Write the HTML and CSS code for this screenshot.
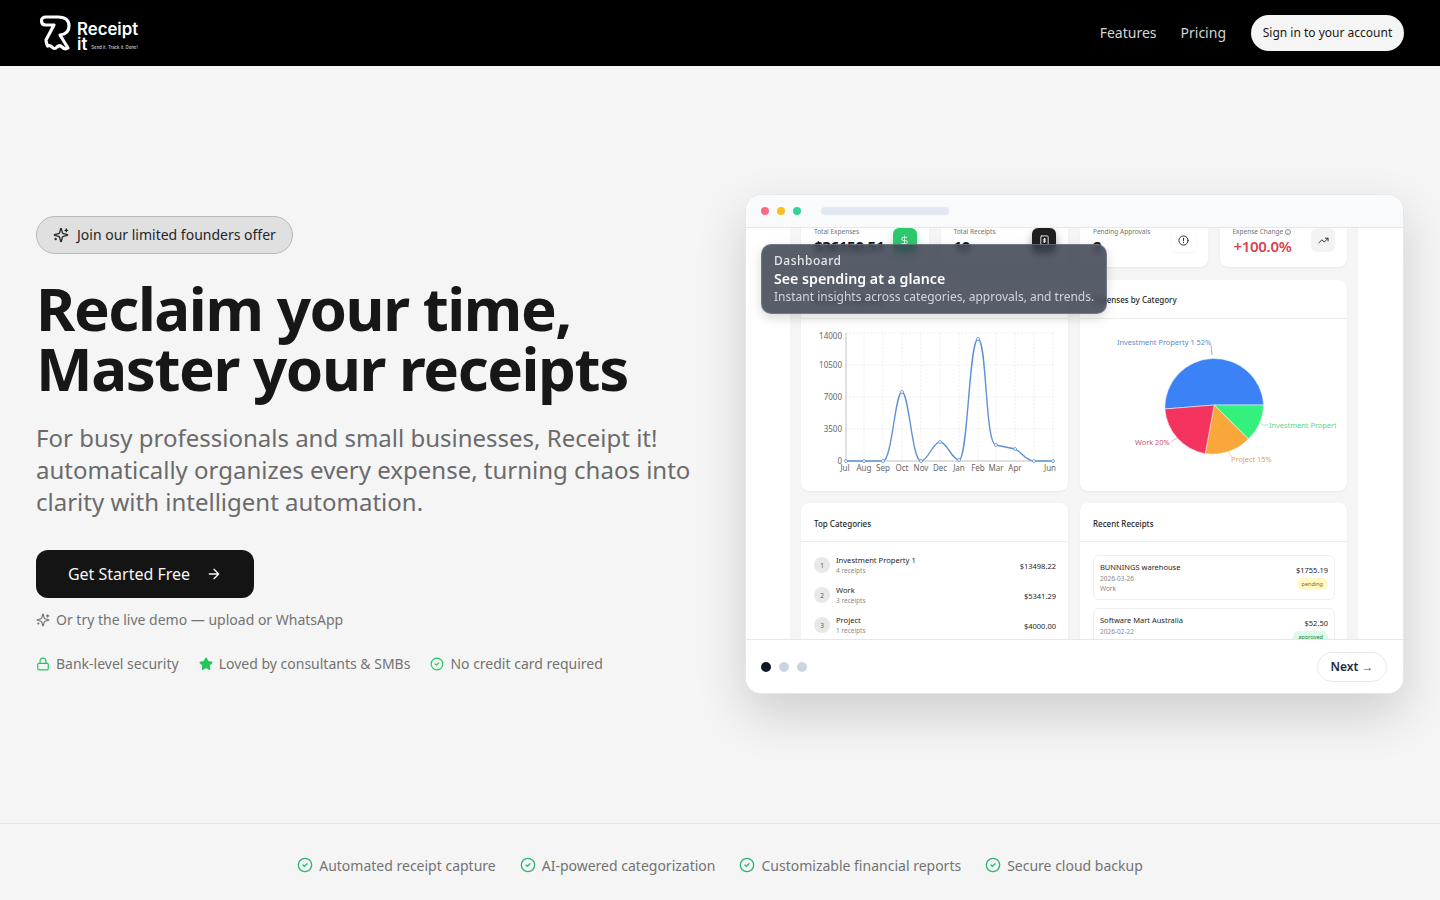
FILE: index.html
```html
<!DOCTYPE html>
<html lang="en">
<head>
    <meta charset="UTF-8">
    <meta name="viewport" content="width=device-width, initial-scale=1.0">
    <title>Receipt it!</title>
    <link rel="stylesheet" href="styles.css">
</head>
<body>

    <svg class="icon-defs" width="0" height="0">
        <symbol id="i-sparkles" viewBox="0 0 24 24"><path d="M9.937 15.5A2 2 0 0 0 8.5 14.063l-6.135-1.582a.5.5 0 0 1 0-.962L8.5 9.936A2 2 0 0 0 9.937 8.5l1.582-6.135a.5.5 0 0 1 .963 0L14.063 8.5A2 2 0 0 0 15.5 9.937l6.135 1.581a.5.5 0 0 1 0 .964L15.5 14.063a2 2 0 0 0-1.437 1.437l-1.582 6.135a.5.5 0 0 1-.963 0z"/><path d="M20 3v4M22 5h-4M4 17v2M5 18H3"/></symbol>
        <symbol id="i-check" viewBox="0 0 24 24"><circle cx="12" cy="12" r="10"/><path d="m9 12 2 2 4-4"/></symbol>
    </svg>

    <header class="topbar">
        <a class="logo" href="#">
            <svg class="logo-mark" viewBox="38 12 34 40" width="34" height="40"><path d="M54 24H45.500Q41.500 24 41.500 20Q41.500 16 46 16H58Q69 16 69 25Q69 33 60 34L68 47Q65 49 62 46Q59.500 43.500 57 46Q54.500 49 52 46Q50 44 47.500 45Q46 41 46 39Z"/></svg>
            <div class="logo-text">
                <div class="logo-name">Receipt</div>
                <div class="logo-sub"><span class="logo-it">it</span><span class="logo-tag">Send it. Track it. Done!</span></div>
            </div>
        </a>
        <nav class="nav">
            <a class="nav-link" href="#">Features</a>
            <a class="nav-link" href="#">Pricing</a>
            <a class="signin" href="#">Sign in to your account</a>
        </nav>
    </header>

    <main class="hero">
        <section class="hero-left">
            <div class="badge"><svg class="ico ico-16"><use href="#i-sparkles"/></svg>Join our limited founders offer</div>
            <h1>Reclaim your time,<br>Master your receipts</h1>
            <p class="lead">For busy professionals and small businesses, Receipt it! automatically organizes every expense, turning chaos into clarity with intelligent automation.</p>
            <a class="cta" href="#">Get Started Free
                <svg class="ico ico-16" viewBox="0 0 24 24"><path d="M5 12h14M12 5l7 7-7 7"/></svg>
            </a>
            <div class="demo"><svg class="ico ico-14"><use href="#i-sparkles"/></svg>Or try the live demo — upload or WhatsApp</div>
            <div class="trust">
                <span><svg class="ico ico-14 green" viewBox="0 0 24 24"><rect x="3" y="11" width="18" height="11" rx="2"/><path d="M7 11V7a5 5 0 0 1 10 0v4"/></svg>Bank-level security</span>
                <span><svg class="ico ico-14 green filled" viewBox="0 0 24 24"><path d="M11.525 2.295a.53.53 0 0 1 .95 0l2.31 4.679a2.123 2.123 0 0 0 1.595 1.16l5.166.756a.53.53 0 0 1 .294.904l-3.736 3.638a2.123 2.123 0 0 0-.611 1.878l.882 5.14a.53.53 0 0 1-.771.56l-4.618-2.428a2.122 2.122 0 0 0-1.973 0L6.396 21.01a.53.53 0 0 1-.77-.56l.881-5.139a2.122 2.122 0 0 0-.611-1.879L2.16 9.795a.53.53 0 0 1 .294-.906l5.165-.755a2.122 2.122 0 0 0 1.597-1.16z"/></svg>Loved by consultants &amp; SMBs</span>
                <span><svg class="ico ico-14 green"><use href="#i-check"/></svg>No credit card required</span>
            </div>
        </section>

        <section class="window">
            <div class="window-bar">
                <span class="dot dot-red"></span>
                <span class="dot dot-yellow"></span>
                <span class="dot dot-green"></span>
                <span class="url-pill"></span>
            </div>

            <div class="window-body">
                <div class="dash">
                    <div class="stats">
                        <div class="stat">
                            <div><div class="stat-label">Total Expenses</div><div class="stat-value">$36150.51</div></div>
                            <div class="stat-icon si-green"><svg class="ico ico-11" viewBox="0 0 24 24"><path d="M12 2v20M17 5H9.500a3.500 3.500 0 0 0 0 7h5a3.500 3.500 0 0 1 0 7H6"/></svg></div>
                        </div>
                        <div class="stat">
                            <div><div class="stat-label">Total Receipts</div><div class="stat-value">10</div></div>
                            <div class="stat-icon si-dark"><svg class="ico ico-11" viewBox="0 0 24 24"><rect x="4" y="2" width="16" height="20" rx="2"/><path d="M14.500 9H11a1.500 1.500 0 0 0 0 3h2a1.500 1.500 0 0 1 0 3H9.500M12 7.500v9"/></svg></div>
                        </div>
                        <div class="stat">
                            <div><div class="stat-label">Pending Approvals</div><div class="stat-value">2</div></div>
                            <div class="stat-icon si-white"><svg class="ico ico-11" viewBox="0 0 24 24"><circle cx="12" cy="12" r="10"/><path d="M12 7v6M12 16.500v.5"/></svg></div>
                        </div>
                        <div class="stat">
                            <div><div class="stat-label">Expense Change <span class="info">i</span></div><div class="stat-value stat-red">+100.0%</div></div>
                            <div class="stat-icon si-grey"><svg class="ico ico-11" viewBox="0 0 24 24"><path d="M22 7l-8.500 8.500-5-5L2 17M16 7h6v6"/></svg></div>
                        </div>
                    </div>

                    <div class="cards">
                        <div class="card">
                            <div class="card-head">Monthly Expenses</div>
                            <svg class="chart" viewBox="801 319 267 172">
                                <g class="grid">
                                    <path d="M864 333V461M883 333V461M902 333V461M921 333V461M940 333V461M959 333V461M978 333V461M996 333V461M1015 333V461M1034 333V461M1053 333V461"/>
                                    <path d="M846 333H1054M846 365H1054M846 397H1054M846 429H1054"/>
                                </g>
                                <path class="axis" d="M846 333V461H1054"/>
                                <g class="tick-y">
                                    <text x="842" y="339">14000</text>
                                    <text x="842" y="368">10500</text>
                                    <text x="842" y="400">7000</text>
                                    <text x="842" y="432">3500</text>
                                    <text x="842" y="464">0</text>
                                </g>
                                <g class="tick-x">
                                    <text x="845" y="471">Jul</text><text x="864" y="471">Aug</text><text x="883" y="471">Sep</text><text x="902" y="471">Oct</text><text x="921" y="471">Nov</text><text x="940" y="471">Dec</text><text x="959" y="471">Jan</text><text x="978" y="471">Feb</text><text x="996" y="471">Mar</text><text x="1015" y="471">Apr</text><text x="1050" y="471">Jun</text>
                                </g>
                                <path class="line" d="M846 461H883C892 461 895 392 902 392C909 392 912 461 921 461C928 461 933 442 940 442C947 442 952 460 959 460C968 460 969 339 978 339C987 339 985 445 996 445L1015 449C1022 452 1026 461 1034 461H1053"/>
                                <g class="points">
                                    <circle cx="846" cy="461" r="1.500"/><circle cx="864" cy="461" r="1.500"/><circle cx="883" cy="461" r="1.500"/><circle cx="902" cy="392" r="1.500"/><circle cx="921" cy="461" r="1.500"/><circle cx="940" cy="442" r="1.500"/><circle cx="959" cy="460" r="1.500"/><circle cx="978" cy="339" r="1.500"/><circle cx="996" cy="445" r="1.500"/><circle cx="1015" cy="449" r="1.500"/><circle cx="1034" cy="461" r="1.500"/><circle cx="1053" cy="461" r="1.500"/>
                                </g>
                            </svg>
                        </div>

                        <div class="card">
                            <div class="card-head">Expenses by Category</div>
                            <svg class="chart" viewBox="1080 319 267 172">
                                <defs><clipPath id="pie-clip"><rect x="1080" y="319" width="256" height="172"/></clipPath></defs>
                                <g transform="translate(0.7 0)">
                                    <path class="slice" fill="#3b82f6" d="M1213.500 405L1263 405A49.500 49.500 0 0 0 1164.100 409Z"/>
                                    <path class="slice" fill="#34f07c" d="M1213.500 405L1263 405A49.500 49.500 0 0 1 1247.700 439Z"/>
                                    <path class="slice" fill="#f9a63a" d="M1213.500 405L1247.700 439A49.500 49.500 0 0 1 1204.500 453.700Z"/>
                                    <path class="slice" fill="#f5335f" d="M1213.500 405L1204.500 453.700A49.500 49.500 0 0 1 1164.100 409Z"/>
                                </g>
                                <path class="leader" stroke="#6f95d8" d="M1211 345L1212 355"/>
                                <path class="leader" stroke="#7ce6a6" d="M1258 421L1263 425H1268"/>
                                <path class="leader" stroke="#f0bd7c" d="M1228 451L1232 457"/>
                                <path class="leader" stroke="#e58a9e" d="M1171 442L1178 437"/>
                                <g class="pie-labels" clip-path="url(#pie-clip)">
                                    <text x="1117" y="345" fill="#6288c9">Investment Property 1 52%</text>
                                    <text x="1269" y="428" fill="#58d68d">Investment Property 2 13%</text>
                                    <text x="1231" y="462" fill="#e0a35a">Project 15%</text>
                                    <text x="1135" y="445" fill="#c8566f">Work 20%</text>
                                </g>
                            </svg>
                        </div>

                        <div class="card">
                            <div class="card-head card-head-b">Top Categories</div>
                            <div class="cat-list">
                                <div class="cat"><span class="rank">1</span><div class="cat-info"><div class="cat-name">Investment Property 1</div><div class="cat-sub">4 receipts</div></div><span class="cat-amt">$13498.22</span></div>
                                <div class="cat"><span class="rank">2</span><div class="cat-info"><div class="cat-name">Work</div><div class="cat-sub">3 receipts</div></div><span class="cat-amt">$5341.29</span></div>
                                <div class="cat"><span class="rank">3</span><div class="cat-info"><div class="cat-name">Project</div><div class="cat-sub">1 receipts</div></div><span class="cat-amt">$4000.00</span></div>
                            </div>
                        </div>

                        <div class="card">
                            <div class="card-head card-head-b">Recent Receipts</div>
                            <div class="rec-list">
                                <div class="rec">
                                    <div><div class="rec-name">BUNNINGS warehouse</div><div class="rec-sub">2026-03-26</div><div class="rec-sub">Work</div></div>
                                    <div class="rec-right"><div class="rec-amt">$1755.19</div><span class="tag tag-pending">pending</span></div>
                                </div>
                                <div class="rec">
                                    <div><div class="rec-name">Software Mart Australia</div><div class="rec-sub">2026-02-22</div><div class="rec-sub">Work</div></div>
                                    <div class="rec-right"><div class="rec-amt">$52.50</div><span class="tag tag-approved">approved</span></div>
                                </div>
                            </div>
                        </div>
                    </div>
                </div>

                <div class="tip">
                    <div class="tip-kicker">Dashboard</div>
                    <div class="tip-title">See spending at a glance</div>
                    <div class="tip-text">Instant insights across categories, approvals, and trends.</div>
                </div>
            </div>

            <div class="window-foot">
                <div class="steps"><span class="step step-on"></span><span class="step"></span><span class="step"></span></div>
                <button class="next">Next <span class="next-arrow">→</span></button>
            </div>
        </section>
    </main>

    <footer class="features">
        <span><svg class="ico ico-16 green"><use href="#i-check"/></svg>Automated receipt capture</span>
        <span><svg class="ico ico-16 green"><use href="#i-check"/></svg>AI-powered categorization</span>
        <span><svg class="ico ico-16 green"><use href="#i-check"/></svg>Customizable financial reports</span>
        <span><svg class="ico ico-16 green"><use href="#i-check"/></svg>Secure cloud backup</span>
    </footer>

</body>
</html>
```

FILE: styles.css
```css
* { box-sizing: border-box; }
body { margin: 0; height: 900px; display: flex; flex-direction: column; overflow: hidden; font-family: "Noto Sans", sans-serif; background: #f5f5f5; color: #171717; }
a { text-decoration: none; color: inherit; }
.icon-defs { position: absolute; }

.ico { fill: none; stroke: currentColor; stroke-width: 2; stroke-linecap: round; stroke-linejoin: round; flex: none; }
.ico-11 { width: 11px; height: 11px; }
.ico-14 { width: 14px; height: 14px; }
.ico-16 { width: 16px; height: 16px; }
.green { color: #22c55e; }
.filled { fill: currentColor; }

/* top bar */
.topbar { height: 66px; flex: none; background: #000; display: flex; align-items: center; justify-content: space-between; padding: 0 36px; }
.logo { display: flex; align-items: center; gap: 5px; color: #fff; margin-left: 2px; }
.logo-mark { fill: none; stroke: #fff; stroke-width: 3.200; stroke-linejoin: round; stroke-linecap: round; }
.logo-text { font-family: Inter, sans-serif; font-weight: 600; margin-top: 8px; }
.logo-name { font-size: 16.800px; line-height: 15px; }
.logo-sub { display: flex; align-items: flex-end; line-height: 15px; }
.logo-it { font-size: 16.800px; }
.logo-tag { font-size: 4.300px; font-weight: 500; margin: 0 0 0 4px; line-height: 8px; color: #ccc; }
.nav { display: flex; align-items: center; gap: 24px; color: #d4d4d4; font-size: 14px; }
.nav-link { padding-bottom: 2px; }
.signin { height: 36px; width: 153px; padding-bottom: 2px; margin-left: 1px; border-radius: 18px; background: #f5f5f5; color: #171717; font-size: 12px; display: flex; align-items: center; justify-content: center; }

/* hero */
.hero { flex: 1; display: grid; grid-template-columns: 1fr 659px; gap: 49px; align-items: center; padding: 0 36px; }
.badge { display: inline-flex; align-items: center; gap: 8px; height: 38px; padding: 0 16px; border-radius: 19px; background: #e0e0e0; border: 1px solid #b8b8b8; font-size: 14px; color: #262626; }
h1 { margin: 24px 0 24px; font-size: 60px; line-height: 60px; font-weight: 700; letter-spacing: -1.420px; color: #171717; }
.lead { margin: 0 0 32px; font-size: 24px; line-height: 32px; color: #6b6b6b; }
.cta { display: inline-flex; align-items: center; justify-content: center; gap: 16px; width: 218px; height: 48px; border-radius: 12px; background: #141414; color: #f5f5f5; font-size: 16px; }
.demo { display: flex; align-items: center; gap: 6px; margin-top: 12px; font-size: 14px; line-height: 20px; color: #737373; }
.trust { display: flex; gap: 20px; margin-top: 24px; font-size: 14px; line-height: 20px; color: #737373; }
.trust span { display: flex; align-items: center; gap: 6px; }

/* dashboard window */
.window { height: 500px; margin-bottom: 1px; display: flex; flex-direction: column; background: #fff; border: 1px solid #e5e7eb; border-radius: 16px; overflow: hidden; box-shadow: 0 20px 50px rgba(0, 0, 0, 0.16); }
.window-bar { height: 33px; flex: none; display: flex; align-items: center; gap: 8px; padding: 0 15px; background: #f8fafc; border-bottom: 1px solid #e2e8f0; }
.dot { width: 8px; height: 8px; border-radius: 50%; }
.dot-red { background: #fb6a85; }
.dot-yellow { background: #fbbf24; }
.dot-green { background: #34d399; }
.url-pill { width: 128px; height: 8px; margin-left: 12px; border-radius: 4px; background: #e2e8f0; }
.window-body { flex: 1; min-height: 0; position: relative; overflow: hidden; padding: 0 45px 0 44px; }
.dash { background: #f5f5f5; padding: 0 11px; margin-top: -12px; font-size: 8px; color: #262626; }

.stats { display: grid; grid-template-columns: repeat(4, 1fr); gap: 12px; }
.stat { height: 51px; padding: 12px 12px 0 13px; display: flex; justify-content: space-between; background: #fff; border-radius: 8px; box-shadow: 0 1px 2px rgba(0, 0, 0, 0.06); }
.stat-label { font-size: 6.500px; line-height: 8px; color: #737373; }
.info { display: inline-block; width: 6px; height: 6px; border: 0.500px solid #8a8a8a; border-radius: 50%; font-size: 4px; line-height: 5px; text-align: center; }
.stat-value { font-size: 15px; line-height: 20px; font-weight: 700; letter-spacing: -0.300px; color: #171717; }
.stat-red { color: #d9434e; font-weight: 600; margin-left: 1px; }
.stat-icon { width: 24px; height: 24px; border-radius: 6px; display: flex; align-items: center; justify-content: center; box-shadow: 0 2px 6px rgba(0, 0, 0, 0.1); }
.si-green { background: #2fc76c; color: #e8fff1; box-shadow: 0 4px 8px rgba(47, 199, 108, 0.35); }
.si-dark { background: #1f1f1f; color: #eee; box-shadow: 0 4px 8px rgba(0, 0, 0, 0.35); }
.si-white { background: #fff; color: #222; box-shadow: 0 1px 3px rgba(0, 0, 0, 0.05); }
.si-grey { background: #f3f3f3; color: #222; box-shadow: none; }

.cards { display: grid; grid-template-columns: 1fr 1fr; gap: 12px; margin-top: 13px; }
.card { background: #fff; border-radius: 8px; box-shadow: 0 1px 2px rgba(0, 0, 0, 0.06); overflow: hidden; }
.card-head { height: 39px; padding: 1px 13px 0; display: flex; align-items: center; border-bottom: 1px solid #ececec; font-size: 8px; font-weight: 500; color: #262626; }
.card-head-b { padding-top: 3px; }
.chart { display: block; width: 267px; height: 172px; }
.grid path { fill: none; stroke: #e3e3e3; stroke-width: 0.600; stroke-dasharray: 2 1.500; }
.axis { fill: none; stroke: #999; stroke-width: 0.600; }
.tick-y text { font-size: 8px; fill: #666; text-anchor: end; }
.tick-x text { font-size: 8px; fill: #666; text-anchor: middle; }
.line { fill: none; stroke: #5e92d2; stroke-width: 1.400; }
.points circle { fill: #fff; stroke: #5e92d2; stroke-width: 0.800; }
.slice { stroke: #fff; stroke-width: 0.500; }
.leader { fill: none; stroke-width: 0.700; }
.pie-labels text { font-size: 7.400px; }

.cat-list { padding: 11px 12px 0 13px; display: flex; flex-direction: column; gap: 6px; }
.cat { display: flex; align-items: center; gap: 6px; height: 24px; }
.rank { width: 16px; height: 16px; border-radius: 50%; background: #e8e8e8; color: #555; font-size: 6.500px; display: flex; align-items: center; justify-content: center; }
.cat-info { flex: 1; }
.cat-name { font-size: 7.600px; line-height: 10px; margin-bottom: 1px; color: #262626; }
.cat-sub { font-size: 6.500px; line-height: 10px; color: #8a8a8a; }
.cat-amt { font-size: 7.500px; margin-top: 1px; color: #262626; }

.rec-list { padding: 13px 12px 0 13px; display: flex; flex-direction: column; gap: 8px; }
.rec { height: 45px; padding: 0 6px; display: flex; justify-content: space-between; align-items: center; border: 1px solid #efefef; border-radius: 6px; }
.rec-name { font-size: 7.500px; line-height: 12px; margin-bottom: 1px; color: #262626; }
.rec-sub { font-size: 6.500px; line-height: 10px; color: #8a8a8a; }
.rec-right { display: flex; flex-direction: column; align-items: flex-end; gap: 2px; margin-bottom: 2px; }
.rec-amt { font-size: 7.500px; line-height: 12px; color: #262626; }
.tag { height: 12px; padding: 0 5px; border-radius: 6px; font-size: 5.500px; line-height: 12px; }
.tag-pending { background: #fef9c3; color: #a16207; }
.tag-approved { background: #dcfce7; color: #15803d; }

.tip { position: absolute; left: 15px; top: 16px; width: 346px; height: 70px; padding: 7px 12px; background: rgba(55, 62, 76, 0.84); border: 1px solid rgba(255, 255, 255, 0.18); border-radius: 10px; backdrop-filter: blur(3px); box-shadow: 0 4px 12px rgba(0, 0, 0, 0.15); }
.tip-kicker { font-size: 12px; line-height: 17px; font-weight: 500; letter-spacing: 0.500px; color: #e5e7eb; }
.tip-title { font-size: 14.200px; line-height: 20px; font-weight: 600; color: #fff; }
.tip-text { font-size: 12px; line-height: 15px; white-space: nowrap; color: #d1d5db; }

.window-foot { height: 54px; flex: none; display: flex; align-items: center; justify-content: space-between; padding: 0 16px 0 15px; background: #fff; border-top: 1px solid #e2e8f0; }
.steps { display: flex; gap: 8px; }
.step { width: 10px; height: 10px; border-radius: 50%; background: #cbd5e1; }
.step-on { background: #0f172a; }
.next { width: 70px; height: 30px; padding: 0; border: 1px solid #e5e7eb; border-radius: 15px; background: #fff; font-family: inherit; font-size: 12px; font-weight: 600; color: #1e293b; }
.next-arrow { font-weight: 400; color: #475569; font-size: 12px; }

/* feature strip */
.features { height: 77px; flex: none; padding-top: 6px; display: flex; align-items: center; justify-content: center; gap: 24px; border-top: 1px solid #e5e5e5; font-size: 14px; color: #737373; }
.features span { display: flex; align-items: center; gap: 6px; }
.features .green { color: #2bb673; }
```
